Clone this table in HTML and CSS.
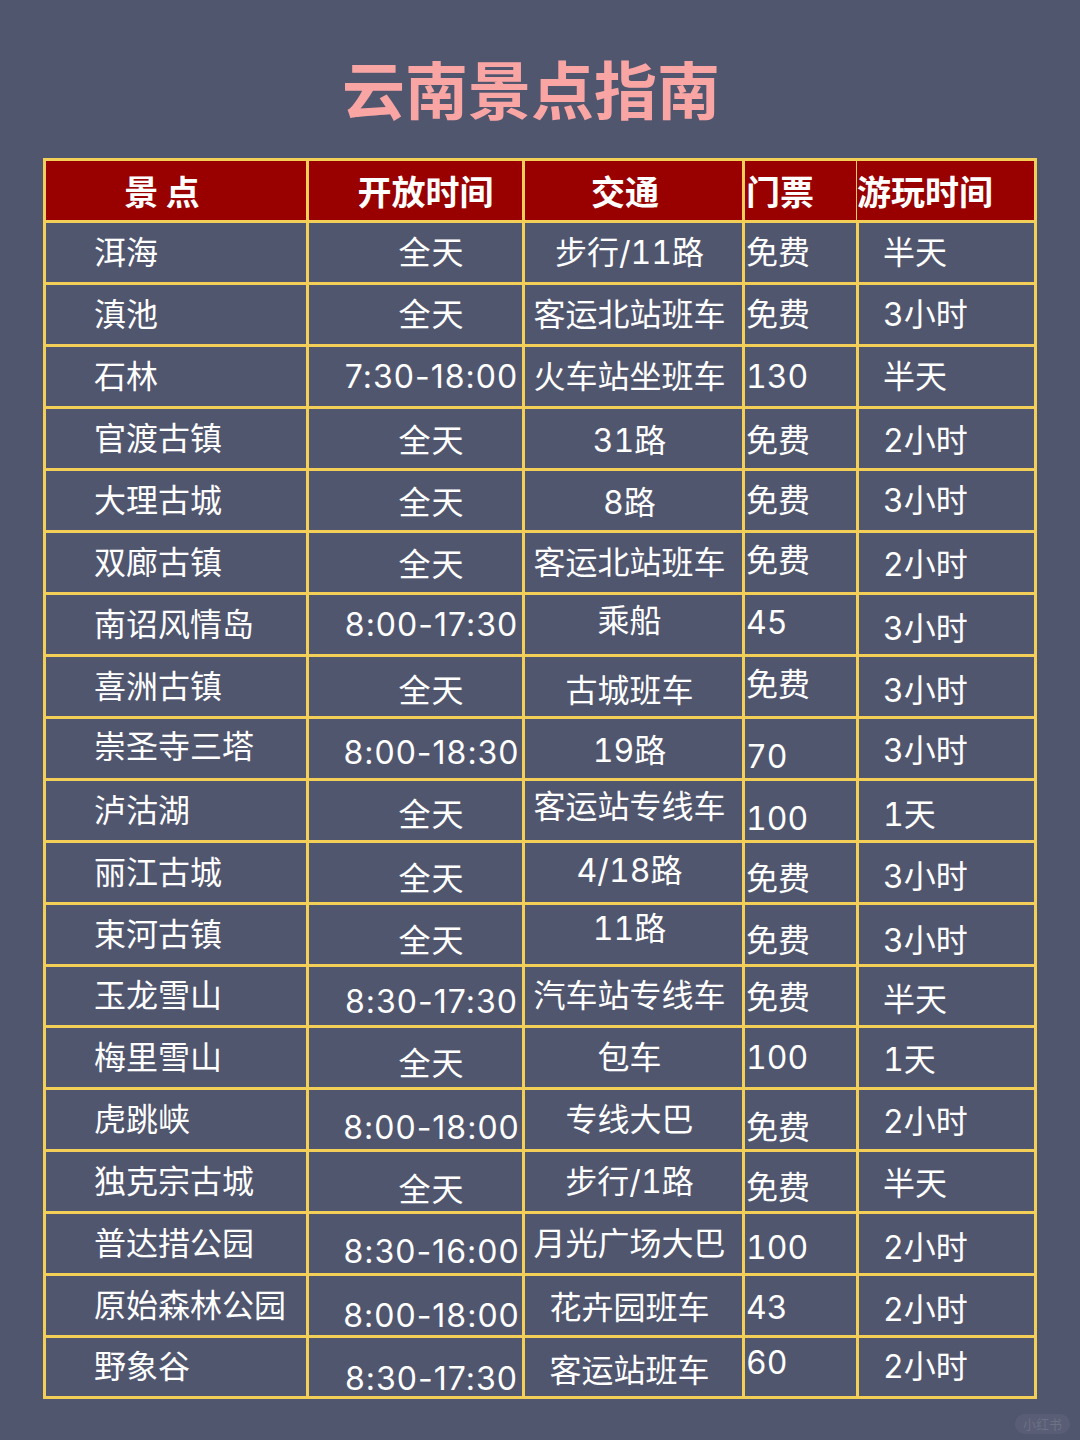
FILE: index.html
```html
<!DOCTYPE html>
<html lang="zh-CN">
<head>
<meta charset="utf-8">
<title>云南景点指南</title>
<link rel="stylesheet" href="styles.css">
</head>
<body>
<main class="page">
  <h1 class="title">云南景点指南</h1>
  <div class="guide" role="table">
    <div class="row head" role="row">
      <div class="cell h-name" role="columnheader">景 点</div>
      <div class="cell h-open" role="columnheader">开放时间</div>
      <div class="cell h-bus" role="columnheader">交通</div>
      <div class="cell h-fee" role="columnheader">门票</div>
      <div class="cell h-dur" role="columnheader">游玩时间</div>
    </div>
    <div class="row" role="row"><div class="cell name">洱海</div><div class="cell open">全天</div><div class="cell bus">步行/11路</div><div class="cell fee">免费</div><div class="cell dur">半天</div></div>
    <div class="row" role="row"><div class="cell name">滇池</div><div class="cell open">全天</div><div class="cell bus">客运北站班车</div><div class="cell fee">免费</div><div class="cell dur">3小时</div></div>
    <div class="row" role="row"><div class="cell name">石林</div><div class="cell open">7:30-18:00</div><div class="cell bus">火车站坐班车</div><div class="cell fee">130</div><div class="cell dur">半天</div></div>
    <div class="row" role="row"><div class="cell name">官渡古镇</div><div class="cell open dn2">全天</div><div class="cell bus dn2">31路</div><div class="cell fee dn2">免费</div><div class="cell dur dn2">2小时</div></div>
    <div class="row" role="row"><div class="cell name">大理古城</div><div class="cell open dn2">全天</div><div class="cell bus dn2">8路</div><div class="cell fee">免费</div><div class="cell dur">3小时</div></div>
    <div class="row" role="row"><div class="cell name">双廊古镇</div><div class="cell open dn2">全天</div><div class="cell bus">客运北站班车</div><div class="cell fee up2">免费</div><div class="cell dur dn2">2小时</div></div>
    <div class="row" role="row"><div class="cell name">南诏风情岛</div><div class="cell open">8:00-17:30</div><div class="cell bus up4">乘船</div><div class="cell fee up2">45</div><div class="cell dur dn4">3小时</div></div>
    <div class="row" role="row"><div class="cell name">喜洲古镇</div><div class="cell open dn4">全天</div><div class="cell bus dn4">古城班车</div><div class="cell fee up2">免费</div><div class="cell dur dn4">3小时</div></div>
    <div class="row" role="row"><div class="cell name up2">崇圣寺三塔</div><div class="cell open dn4">8:00-18:30</div><div class="cell bus dn2">19路</div><div class="cell fee dn8">70</div><div class="cell dur dn2">3小时</div></div>
    <div class="row" role="row"><div class="cell name">泸沽湖</div><div class="cell open dn4">全天</div><div class="cell bus up4">客运站专线车</div><div class="cell fee dn8">100</div><div class="cell dur dn4">1天</div></div>
    <div class="row" role="row"><div class="cell name">丽江古城</div><div class="cell open dn6">全天</div><div class="cell bus up2">4/18路</div><div class="cell fee dn6">免费</div><div class="cell dur dn4">3小时</div></div>
    <div class="row" role="row"><div class="cell name">束河古镇</div><div class="cell open dn6">全天</div><div class="cell bus up6">11路</div><div class="cell fee dn6">免费</div><div class="cell dur dn6">3小时</div></div>
    <div class="row short" role="row"><div class="cell name">玉龙雪山</div><div class="cell open dn6">8:30-17:30</div><div class="cell bus">汽车站专线车</div><div class="cell fee dn2">免费</div><div class="cell dur dn4">半天</div></div>
    <div class="row" role="row"><div class="cell name">梅里雪山</div><div class="cell open dn6">全天</div><div class="cell bus">包车</div><div class="cell fee">100</div><div class="cell dur dn2">1天</div></div>
    <div class="row" role="row"><div class="cell name">虎跳峡</div><div class="cell open dn8">8:00-18:00</div><div class="cell bus">专线大巴</div><div class="cell fee dn8">免费</div><div class="cell dur dn2">2小时</div></div>
    <div class="row" role="row"><div class="cell name">独克宗古城</div><div class="cell open dn8">全天</div><div class="cell bus">步行/1路</div><div class="cell fee dn6">免费</div><div class="cell dur dn2">半天</div></div>
    <div class="row" role="row"><div class="cell name">普达措公园</div><div class="cell open dn8">8:30-16:00</div><div class="cell bus">月光广场大巴</div><div class="cell fee dn4">100</div><div class="cell dur dn4">2小时</div></div>
    <div class="row" role="row"><div class="cell name">原始森林公园</div><div class="cell open dn10">8:00-18:00</div><div class="cell bus dn2">花卉园班车</div><div class="cell fee dn2">43</div><div class="cell dur dn4">2小时</div></div>
    <div class="row short" role="row"><div class="cell name">野象谷</div><div class="cell open dn12">8:30-17:30</div><div class="cell bus dn4">客运站班车</div><div class="cell fee up4">60</div><div class="cell dur">2小时</div></div>
  </div>
  <div class="watermark">小红书</div>
</main>
</body>
</html>
```

FILE: styles.css
```css
html, body {
  margin: 0;
  padding: 0;
  background: #51566f;
}

body {
  font-family: Inter, "Noto Sans CJK SC", "Noto Sans", sans-serif;
  color: #ffffff;
}

.page {
  position: relative;
  width: 1080px;
  height: 1440px;
  box-sizing: border-box;
  padding: 56px 0 0 43px;
  overflow: hidden;
}

.title {
  margin: 0 0 40px -43px;
  padding-right: 18px;
  text-align: center;
  font-family: "Noto Sans CJK SC", sans-serif;
  font-size: 63px;
  line-height: 62px;
  font-weight: 700;
  color: #f9a5a4;
}

.guide {
  width: 994px;
  box-sizing: border-box;
  border-top: 3px solid #f3cf58;
  border-left: 3px solid #f3cf58;
}

.row {
  display: grid;
  grid-template-columns: 263px 216px 220px 114px 178px;
  height: 62px;
}

.row.short,
.row.short .cell {
  height: 61px;
}

.cell {
  box-sizing: border-box;
  height: 62px;
  border-right: 3px solid #f3cf58;
  border-bottom: 3px solid #f3cf58;
  display: flex;
  align-items: center;
  white-space: nowrap;
  font-size: 32px;
  line-height: 32px;
  font-weight: 400;
}

.head .cell {
  background: #990000;
  font-family: "Noto Sans CJK SC", sans-serif;
  font-size: 34px;
  font-weight: 700;
}

.h-name { justify-content: center; padding-right: 28px; }
.h-open { justify-content: center; padding-left: 20px; }
.h-bus  { justify-content: center; padding-right: 17px; }
.h-fee  { padding-left: 1px; }
.h-dur  { padding-left: 0; margin-left: -2px; }

.name { padding-left: 48px; }
.open { justify-content: center; padding-left: 32px; letter-spacing: 1px; }
.bus  { justify-content: center; padding-right: 8px; font-variant-numeric: tabular-nums; }
.fee  { padding-left: 1px; font-variant-numeric: tabular-nums; }
.dur  { padding-left: 24px; font-variant-numeric: tabular-nums; }

.dn2  { padding-top: 4px; }
.dn4  { padding-top: 8px; }
.dn6  { padding-top: 12px; }
.dn8  { padding-top: 16px; }
.dn10 { padding-top: 20px; }
.dn12 { padding-top: 24px; }
.up2  { padding-bottom: 4px; }
.up4  { padding-bottom: 8px; }
.up6  { padding-bottom: 12px; }

.watermark {
  position: absolute;
  right: 10px;
  bottom: 6px;
  padding: 1px 8px;
  border-radius: 10px;
  background: rgba(255, 255, 255, 0.05);
  color: rgba(255, 255, 255, 0.12);
  font-family: "Noto Sans CJK SC", sans-serif;
  font-size: 13px;
  line-height: 18px;
}
```
